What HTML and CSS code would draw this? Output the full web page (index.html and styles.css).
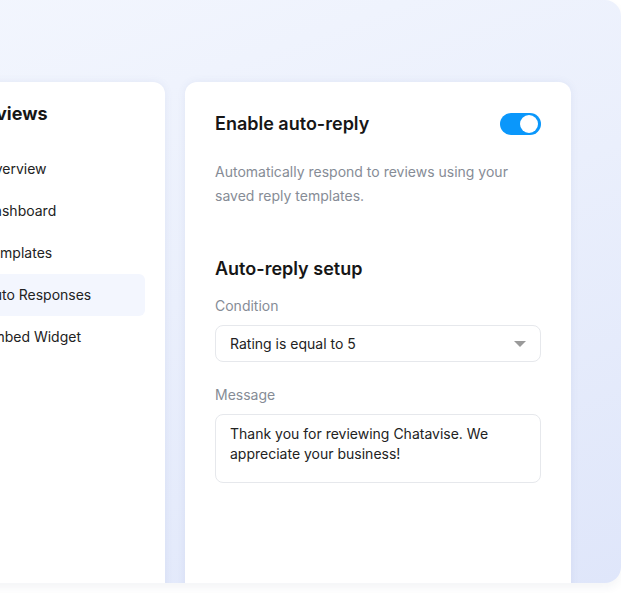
FILE: index.html
```html
<!DOCTYPE html>
<html>
<head>
<meta charset="utf-8">
<link rel="stylesheet" href="styles.css">
</head>
<body>
<div class="stage">
  <div class="panel">
    <aside class="side">
      <h2 class="side-title">Reviews</h2>
      <nav class="nav">
        <div class="nav-item">Overview</div>
        <div class="nav-item">Dashboard</div>
        <div class="nav-item">Templates</div>
        <div class="nav-item active">Auto Responses</div>
        <div class="nav-item">Embed Widget</div>
      </nav>
    </aside>
    <main class="card">
      <div class="card-head">
        <h1 class="card-title">Enable auto-reply</h1>
        <div class="toggle"><span class="knob"></span></div>
      </div>
      <p class="desc">Automatically respond to reviews using your saved reply templates.</p>
      <h2 class="section-title">Auto-reply setup</h2>
      <div class="label">Condition</div>
      <div class="select">
        <span>Rating is equal to 5</span>
        <span class="caret"></span>
      </div>
      <div class="label label-gap">Message</div>
      <div class="textarea">Thank you for reviewing Chatavise. We appreciate your business!</div>
    </main>
  </div>
</div>
</body>
</html>
```
FILE: styles.css
```css
* { box-sizing: border-box; }
html, body { margin: 0; padding: 0; background: #ffffff; }
body {
  font-family: Inter, "Noto Sans", sans-serif;
  width: 621px;
  height: 593px;
  overflow: hidden;
}
.stage {
  margin-left: -200px;
  width: 821px;
  height: 583px;
  border-radius: 16px;
  overflow: hidden;
  background: linear-gradient(160deg, #f4f7fe 0%, #eaeffc 50%, #dfe6fa 100%);
  box-shadow: 0 5px 10px rgba(40, 50, 100, 0.05);
}
.panel {
  display: flex;
  gap: 20px;
  padding-top: 82px;
  padding-left: 154px;
}
.side {
  width: 211px;
  height: 560px;
  background: #ffffff;
  border-radius: 12px;
  padding: 21px 20px 20px 20px;
  box-shadow: 0 0 8px rgba(70, 90, 160, 0.08);
  flex: none;
}
.side-title {
  margin: 0;
  font-size: 18px;
  font-weight: 700;
  line-height: 22px;
  color: #161616;
}
.nav {
  margin-top: 23px;
  display: flex;
  flex-direction: column;
}
.nav-item {
  height: 42px;
  line-height: 42px;
  padding-left: 10px;
  font-size: 14px;
  color: #222;
  border-radius: 6px;
}
.nav-item.active { background: #f3f6fe; }
.card {
  width: 386px;
  height: 560px;
  flex: none;
  background: #ffffff;
  border-radius: 12px;
  padding: 31px 30px;
  box-shadow: 0 0 8px rgba(70, 90, 160, 0.08);
}
.card-head {
  display: flex;
  align-items: center;
  justify-content: space-between;
  height: 22px;
}
.card-title {
  margin: 0;
  font-size: 18px;
  font-weight: 600;
  line-height: 22px;
  color: #161616;
}
.toggle {
  width: 41px;
  height: 22px;
  border-radius: 11px;
  background: #0a97fb;
  position: relative;
}
.knob {
  position: absolute;
  right: 3px;
  top: 2px;
  width: 18px;
  height: 18px;
  border-radius: 50%;
  background: #ffffff;
}
.desc {
  margin: 25px 0 0;
  font-size: 14px;
  line-height: 24px;
  color: #868c96;
}
.section-title {
  margin: 49px 0 0;
  font-size: 18px;
  font-weight: 600;
  line-height: 24px;
  color: #161616;
}
.label {
  margin-top: 15px;
  font-size: 14px;
  line-height: 20px;
  color: #868c96;
}
.label-gap { margin-top: 23px; }
.select {
  margin-top: 9px;
  height: 37px;
  border: 1px solid #e6e8ec;
  border-radius: 8px;
  display: flex;
  align-items: center;
  justify-content: space-between;
  padding: 0 14px 0 14px;
  font-size: 14px;
  color: #222;
}
.caret {
  width: 0;
  height: 0;
  border-left: 6px solid transparent;
  border-right: 6px solid transparent;
  border-top: 6px solid #9a9a9a;
}
.textarea {
  margin-top: 9px;
  height: 69px;
  border: 1px solid #e6e8ec;
  border-radius: 8px;
  padding: 9px 14px;
  font-size: 14px;
  line-height: 20px;
  color: #222;
}
```
